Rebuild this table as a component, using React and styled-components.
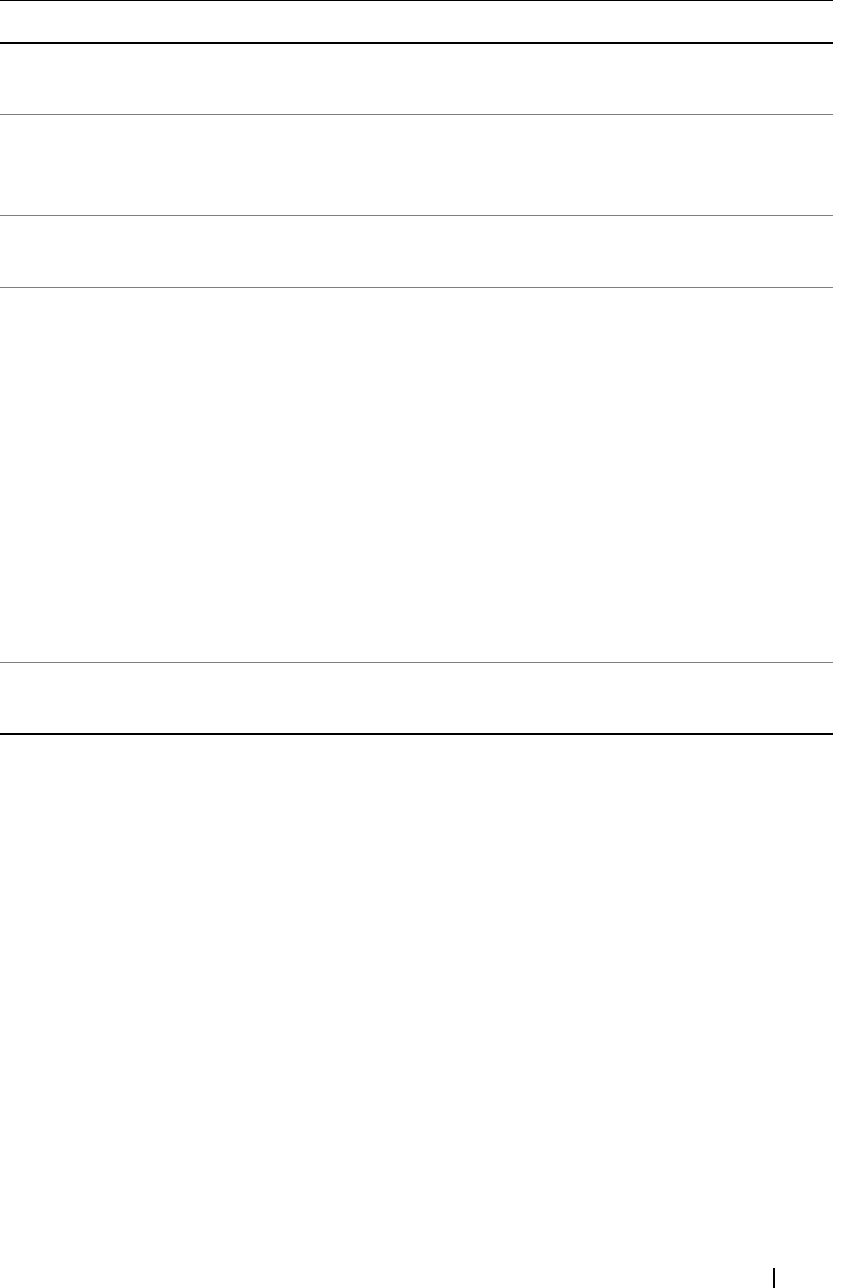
import React from "react";
import styled, { createGlobalStyle } from "styled-components";

const GlobalStyle = createGlobalStyle`
  html, body {
    margin: 0;
    padding: 0;
    background: #fff;
  }
  body {
    font-family: "Liberation Serif", serif;
    color: #000;
  }
`;

// rows of the spec table, heights taken from the page
const rows = [70, 100, 71, 374, 70];

const App = () => {
  return (
    <Page>
      <GlobalStyle />
      <Table>
        <HeaderRow />
        {rows.map((h, i) => (
          <Row key={i} $height={h} $last={i === rows.length - 1} />
        ))}
      </Table>
      <Footer>
        <PageMark />
      </Footer>
    </Page>
  );
};

const Page = styled.div`
  min-height: 1288px;
  display: flex;
  flex-direction: column;
  width: 852px;
`;

const Table = styled.div`
  width: 833px;
  display: flex;
  flex-direction: column;
`;

const HeaderRow = styled.div`
  height: 41px;
  border-top: 1px solid #000;
  border-bottom: 2px solid #000;
`;

const Row = styled.div`
  height: ${(p) => p.$height}px;
  border-bottom: ${(p) => (p.$last ? "2px solid #000" : "1px solid #7f7f7f")};
`;

const Footer = styled.div`
  margin-top: auto;
  display: flex;
  justify-content: flex-end;
  padding-right: 77px;
`;

const PageMark = styled.div`
  width: 2px;
  height: 20px;
  background: #000;
`;

export default App;
